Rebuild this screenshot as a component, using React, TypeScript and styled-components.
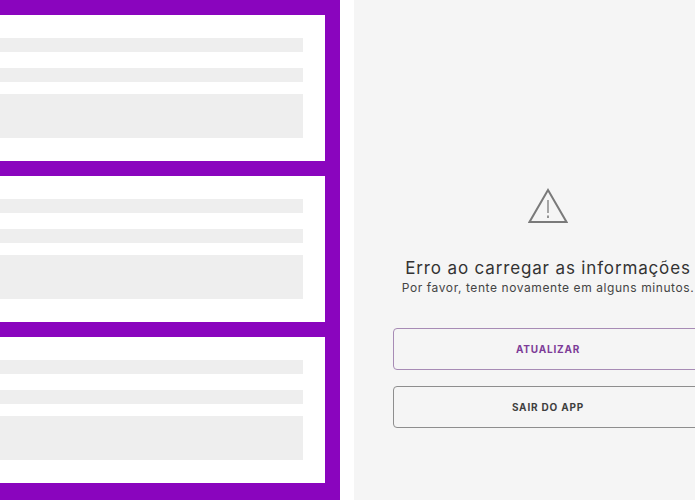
import React from 'react';
import styled, { createGlobalStyle } from 'styled-components';

const GlobalStyle = createGlobalStyle`
  html, body {
    margin: 0;
    padding: 0;
    background: #ffffff;
  }
`;

const cards = [0, 1, 2];

const WarningIcon = () => (
  <svg width="40" height="36" viewBox="0 0 40 36" fill="none" stroke="#7a7a7a" strokeWidth="2">
    <path d="M20 2 L38.5 34 H1.5 Z" strokeLinejoin="miter" />
    <path d="M20 12 V25" strokeWidth="1.3" />
    <path d="M20 27.5 V30" strokeWidth="1.6" />
  </svg>
);

export default function App() {
  return (
    <>
      <GlobalStyle />
      <Page>
        <Feed>
          {cards.map((card) => (
            <Card key={card}>
              <Line />
              <Line />
              <Block />
            </Card>
          ))}
        </Feed>
        <ErrorPanel>
          <WarningIcon />
          <Title>Erro ao carregar as informações</Title>
          <Subtitle>Por favor, tente novamente em alguns minutos.</Subtitle>
          <Actions>
            <ActionButton $accent>ATUALIZAR</ActionButton>
            <ActionButton>SAIR DO APP</ActionButton>
          </Actions>
        </ErrorPanel>
      </Page>
    </>
  );
}

const Page = styled.div`
  display: flex;
  width: 695px;
  height: 500px;
  overflow: hidden;
  background: #ffffff;
  font-family: "Inter", "Liberation Sans", sans-serif;
`;

const Feed = styled.div`
  flex: 0 0 340px;
  display: flex;
  flex-direction: column;
  gap: 15px;
  box-sizing: border-box;
  padding: 15px 15px 0 0;
  background: #8a05be;
`;

const Card = styled.div`
  flex: 0 0 146px;
  display: flex;
  flex-direction: column;
  box-sizing: border-box;
  padding: 23px 22px 23px 0;
  background: #ffffff;
`;

const Line = styled.div`
  height: 14px;
  margin-bottom: 16px;
  background: #eeeeee;

  & + & {
    margin-bottom: 12px;
  }
`;

const Block = styled.div`
  height: 44px;
  background: #eeeeee;
`;

const ErrorPanel = styled.div`
  flex: 0 0 388px;
  margin-left: 14px;
  display: flex;
  flex-direction: column;
  align-items: center;
  box-sizing: border-box;
  padding: 188px 39px 0;
  background: #f5f5f5;
`;

const Title = styled.h1`
  margin: 33px 0 0;
  font-size: 17px;
  line-height: 22px;
  font-weight: 400;
  letter-spacing: 0.85px;
  white-space: nowrap;
  color: #333333;
`;

const Subtitle = styled.p`
  margin: 1px 0 0;
  font-size: 12px;
  line-height: 16px;
  font-weight: 400;
  letter-spacing: 0.58px;
  white-space: nowrap;
  color: #444444;
`;

const Actions = styled.div`
  align-self: stretch;
  display: flex;
  flex-direction: column;
  gap: 16px;
  margin-top: 32px;
`;

const ActionButton = styled.button<{ $accent?: boolean }>`
  height: 42px;
  padding: 0;
  border: 1px solid ${(props) => (props.$accent ? '#a78bb5' : '#8e8e8e')};
  border-radius: 4px;
  background: transparent;
  font-family: inherit;
  font-size: 10px;
  font-weight: 700;
  letter-spacing: 0.8px;
  color: ${(props) => (props.$accent ? '#7d3c98' : '#3f3f3f')};
`;
